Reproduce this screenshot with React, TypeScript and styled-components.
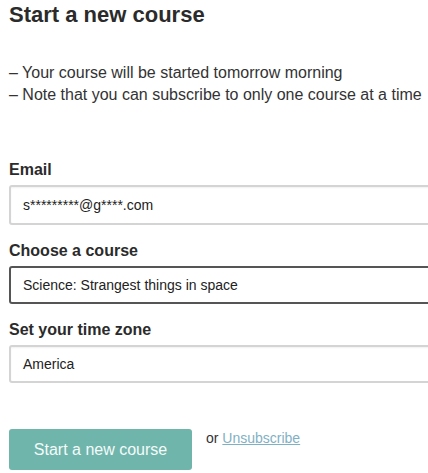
import React from 'react';
import styled, { createGlobalStyle } from 'styled-components';

const GlobalStyle = createGlobalStyle`
  html, body {
    margin: 0;
    padding: 0;
    background: #ffffff;
    overflow: hidden;
  }

  body {
    font-family: 'Liberation Sans', Arial, sans-serif;
    color: #333333;
  }
`;

const Page = styled.div`
  padding: 0 9px;
  width: 428px;
  box-sizing: border-box;
`;

const Title = styled.h1`
  margin: 0;
  padding-top: 2px;
  font-size: 22px;
  line-height: 26px;
  font-weight: bold;
  color: #2b2b2b;
`;

const Notes = styled.ul`
  list-style: none;
  margin: 34px 0 0 0;
  padding: 0;
  font-size: 16px;
  line-height: 22px;
  white-space: nowrap;
`;

const Note = styled.li`
  margin: 0;
`;

const Form = styled.form`
  margin-top: 54px;
  display: flex;
  flex-direction: column;
`;

const Label = styled.label`
  display: block;
  font-size: 16px;
  line-height: 20px;
  font-weight: bold;
  color: #2b2b2b;
  margin-bottom: 5px;
`;

const Field = styled.div<{ $active?: boolean; $tall?: boolean }>`
  width: 460px;
  height: ${(p) => (p.$tall ? '40px' : '38px')};
  box-sizing: border-box;
  display: flex;
  align-items: center;
  padding-left: 12px;
  font-size: 14px;
  color: #222222;
  border: 2px solid ${(p) => (p.$active ? '#555555' : '#d4d4d4')};
  border-radius: 3px;
  box-shadow: ${(p) => (p.$active ? 'none' : 'inset 0 1px 2px rgba(0, 0, 0, 0.06)')};
  margin-bottom: 16px;
`;

const Actions = styled.div`
  display: flex;
  align-items: flex-start;
  gap: 14px;
  margin-top: 30px;
`;

const Button = styled.button`
  width: 183px;
  height: 41px;
  border: none;
  border-radius: 3px;
  background: #6fb5ab;
  color: #f4fbfa;
  font-family: 'Liberation Sans', Arial, sans-serif;
  font-size: 16px;
  padding: 0;
  cursor: pointer;
`;

const Alt = styled.span`
  font-size: 14px;
  line-height: 16px;
  margin-top: 1px;
  color: #333333;
`;

const Link = styled.a`
  color: #7fb1c4;
  text-decoration: underline;
`;

export default function App() {
  return (
    <Page>
      <GlobalStyle />
      <Title>Start a new course</Title>
      <Notes>
        <Note>– Your course will be started tomorrow morning</Note>
        <Note>– Note that you can subscribe to only one course at a time</Note>
      </Notes>
      <Form>
        <Label>Email</Label>
        <Field $tall>s*********@g****.com</Field>
        <Label>Choose a course</Label>
        <Field $active>Science: Strangest things in space</Field>
        <Label>Set your time zone</Label>
        <Field>America</Field>
        <Actions>
          <Button type="button">Start a new course</Button>
          <Alt>
            or <Link href="#">Unsubscribe</Link>
          </Alt>
        </Actions>
      </Form>
    </Page>
  );
}
